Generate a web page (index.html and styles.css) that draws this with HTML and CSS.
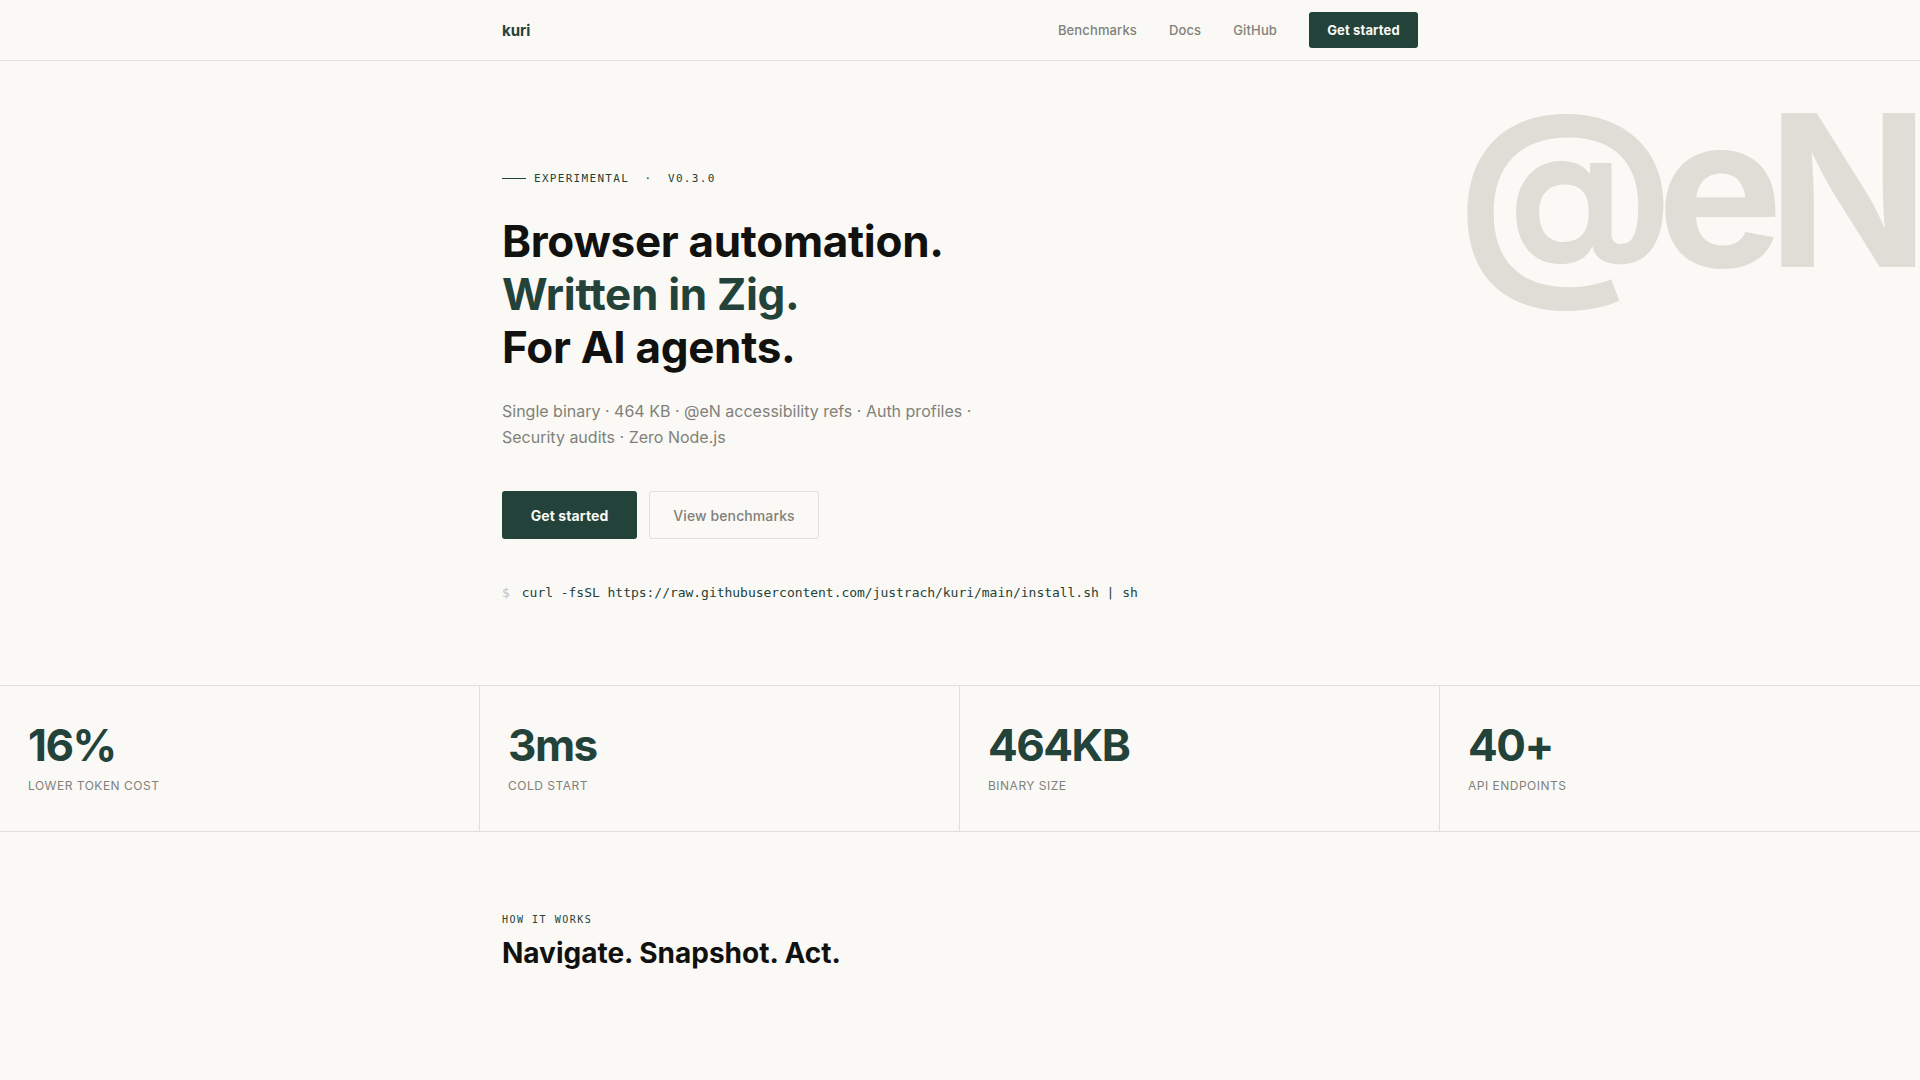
FILE: index.html
```html
<!DOCTYPE html>
<html lang="en">
<head>
    <meta charset="UTF-8">
    <meta name="viewport" content="width=device-width, initial-scale=1.0">
    <title>kuri</title>
    <link rel="stylesheet" href="styles.css">
</head>
<body>
    <header class="topbar">
        <nav class="topbar-inner">
            <a class="logo" href="#">kuri</a>
            <div class="nav-links">
                <a href="#">Benchmarks</a>
                <a href="#">Docs</a>
                <a href="#">GitHub</a>
                <a class="nav-cta" href="#">Get started</a>
            </div>
        </nav>
    </header>

    <section class="hero">
        <div class="hero-mark">@eN</div>
        <div class="column">
            <p class="eyebrow"><span class="eyebrow-rule"></span>EXPERIMENTAL<span class="eyebrow-dot">·</span>V0.3.0</p>
            <h1>Browser automation.<br><span class="accent">Written in Zig.</span><br>For AI agents.</h1>
            <p class="lead">Single binary · 464 KB · @eN accessibility refs · Auth profiles ·<br>Security audits · Zero Node.js</p>
            <div class="actions">
                <a class="btn btn-primary" href="#">Get started</a>
                <a class="btn btn-ghost" href="#">View benchmarks</a>
            </div>
            <p class="install"><span class="prompt">$</span>curl -fsSL https://raw.githubusercontent.com/justrach/kuri/main/install.sh | sh</p>
        </div>
    </section>

    <section class="stats">
        <div class="stat">
            <div class="stat-value">16%</div>
            <div class="stat-label">LOWER TOKEN COST</div>
        </div>
        <div class="stat">
            <div class="stat-value">3ms</div>
            <div class="stat-label">COLD START</div>
        </div>
        <div class="stat">
            <div class="stat-value">464KB</div>
            <div class="stat-label">BINARY SIZE</div>
        </div>
        <div class="stat">
            <div class="stat-value">40+</div>
            <div class="stat-label">API ENDPOINTS</div>
        </div>
    </section>

    <section class="how">
        <div class="column">
            <p class="section-tag">HOW IT WORKS</p>
            <h2>Navigate. Snapshot. Act.</h2>
        </div>
    </section>
</body>
</html>
```

FILE: styles.css
```css
* {
    box-sizing: border-box;
}

html, body {
    height: 100%;
}

body {
    margin: 0;
    height: 1080px;
    overflow: hidden;
    background-color: #faf9f5;
    color: #111110;
    font-family: Inter, 'Noto Sans', sans-serif;
}

a {
    text-decoration: none;
    color: inherit;
}

p, h1, h2 {
    margin: 0;
}

.column {
    width: 916px;
    margin: 0 auto;
    position: relative;
}

.topbar {
    height: 61px;
    border-bottom: 1px solid #e0dfd9;
}

.topbar-inner {
    width: 916px;
    height: 60px;
    margin: 0 auto;
    display: flex;
    align-items: center;
    justify-content: space-between;
}

.logo {
    font-size: 15px;
    font-weight: 700;
    color: #234239;
}

.nav-links {
    display: flex;
    align-items: center;
    gap: 32px;
    font-size: 13px;
    font-weight: 500;
    letter-spacing: 0.13px;
    color: #81817a;
}

.nav-cta {
    height: 36px;
    width: 109px;
    display: flex;
    align-items: center;
    justify-content: center;
    padding-bottom: 1px;
    background-color: #234239;
    color: #faf9f5;
    border-radius: 3px;
    font-weight: 700;
}

.hero {
    position: relative;
    height: 624px;
    padding-top: 109px;
    overflow: hidden;
}

.hero-mark {
    position: absolute;
    top: 2px;
    right: 7px;
    font-size: 212px;
    line-height: 1.2;
    font-weight: 700;
    letter-spacing: -16px;
    color: #dfddd6;
    white-space: nowrap;
}

.eyebrow {
    display: flex;
    align-items: center;
    height: 16px;
    font-family: 'DejaVu Sans Mono', monospace;
    font-size: 11px;
    letter-spacing: 1.3px;
    color: #234239;
}

.eyebrow-rule {
    width: 24px;
    height: 1px;
    margin-right: 8px;
    background-color: #234239;
}

.eyebrow-dot {
    margin: 0 15.5px;
}

h1 {
    margin-top: 29px;
    font-size: 44px;
    line-height: 53px;
    font-weight: 700;
    letter-spacing: -0.3px;
}

.accent {
    color: #234239;
}

.lead {
    margin-top: 24px;
    font-size: 16px;
    line-height: 26px;
    color: #81817a;
}

.actions {
    display: flex;
    gap: 12px;
    margin-top: 41px;
}

.btn {
    height: 48px;
    display: flex;
    align-items: center;
    justify-content: center;
    border-radius: 3px;
    font-size: 14px;
    letter-spacing: 0.1px;
}

.btn-primary {
    width: 135px;
    background-color: #234239;
    color: #faf9f5;
    font-weight: 700;
}

.btn-ghost {
    width: 170px;
    border: 1px solid #e0dfd9;
    color: #81817a;
    font-weight: 500;
}

.install {
    margin-top: 46px;
    font-family: 'DejaVu Sans Mono', monospace;
    font-size: 13px;
    line-height: 16px;
    letter-spacing: -0.03px;
    color: #234239;
}

.prompt {
    color: #c4c3bc;
    margin-right: 12px;
}

.stats {
    display: grid;
    grid-template-columns: repeat(4, 1fr);
    height: 147px;
    border-top: 1px solid #e0dfd9;
    border-bottom: 1px solid #e0dfd9;
}

.stat {
    padding: 33px 28px 0;
    border-right: 1px solid #e0dfd9;
}

.stat:last-child {
    border-right: none;
}

.stat-value {
    font-size: 44px;
    line-height: 52px;
    font-weight: 700;
    letter-spacing: -1.5px;
    color: #234239;
}

.stat-label {
    margin-top: 7px;
    font-size: 12px;
    line-height: 16px;
    letter-spacing: 0.5px;
    color: #81817a;
}

.how {
    padding-top: 81px;
}

.section-tag {
    font-family: 'DejaVu Sans Mono', monospace;
    font-size: 10px;
    line-height: 14px;
    letter-spacing: 1.5px;
    color: #234239;
}

h2 {
    margin-top: 8px;
    font-size: 28px;
    line-height: 36px;
    font-weight: 700;
    letter-spacing: 0;
}
```
